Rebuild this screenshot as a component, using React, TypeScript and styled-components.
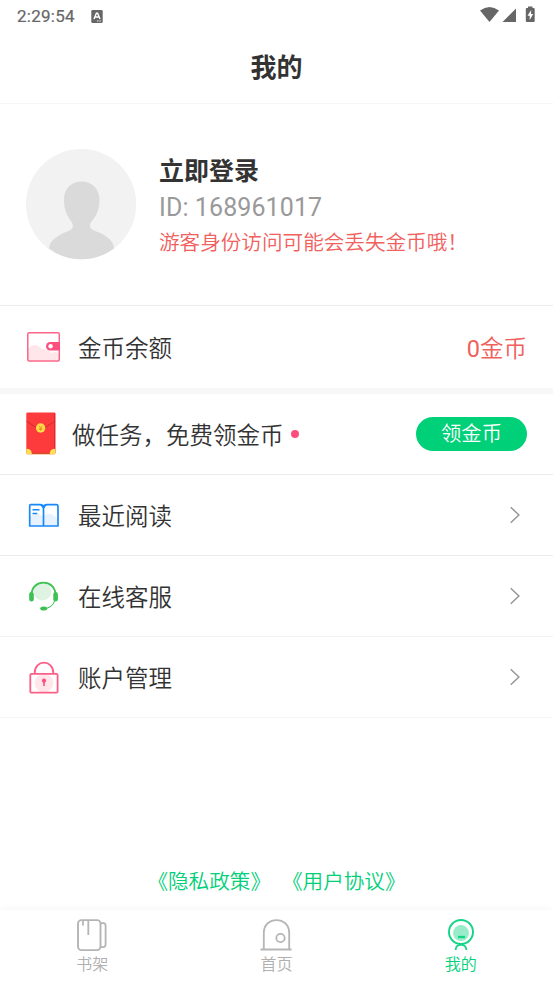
import React from "react";
import styled, { createGlobalStyle } from "styled-components";

const GlobalStyle = createGlobalStyle`
  * { box-sizing: border-box; }
  body {
    margin: 0;
    background: #fff;
    color: #333;
    font-family: Roboto, "Noto Sans CJK SC", sans-serif;
    font-weight: 350;
  }
  svg { display: block; flex: none; }
`;

const Page = styled.div`
  height: 984px;
  display: flex;
  flex-direction: column;
  overflow: hidden;
`;

const StatusBar = styled.div`
  height: 32px;
  flex: none;
  padding: 0 17px;
  display: flex;
  align-items: center;
  color: #666;
`;

const Clock = styled.span`
  width: 74px;
  font-size: 17px;
  font-weight: 400;
  line-height: 30px;
  letter-spacing: 0.25px;
  -webkit-text-stroke: 0.2px #666;
`;

const StatusIcons = styled.div`
  margin-left: auto;
  padding-bottom: 2px;
  display: flex;
`;

const Header = styled.header`
  height: 72px;
  flex: none;
  display: flex;
  justify-content: center;
  border-bottom: 1px solid #f5f5f5;
  font-size: 26px;
  font-weight: 700;
  line-height: 72px;
`;

const Profile = styled.section`
  height: 202px;
  flex: none;
  padding: 45px 26px 0;
  display: flex;
  gap: 22px;
  border-bottom: 1px solid #ebebeb;
`;

const ProfileText = styled.div`
  display: flex;
  flex-direction: column;
  padding-top: 4px;
  white-space: nowrap;
`;

const LoginTitle = styled.div`
  font-size: 25px;
  font-weight: 700;
  line-height: 37px;
`;

const UserId = styled.div`
  color: #999;
  font-size: 25px;
  font-weight: 400;
  line-height: 36px;
  letter-spacing: 0.1px;
`;

const Warning = styled.div`
  color: #f0605d;
  font-size: 20.6px;
  line-height: 34px;
`;

const Row = styled.div<{ $height?: number; $line?: string }>`
  height: ${(p) => p.$height ?? 81}px;
  flex: none;
  padding: 0 26px;
  display: flex;
  align-items: center;
  border-bottom: ${(p) => `1px solid ${p.$line ?? "#ebebeb"}`};
`;

const BalanceRow = styled(Row)`
  border-bottom: 6px solid #f7f7f7;
`;

const IconSlot = styled.div<{ $width?: number; $lift?: number; $drop?: number }>`
  width: ${(p) => p.$width ?? 52}px;
  flex: none;
  padding-bottom: ${(p) => p.$lift ?? 0}px;
  padding-top: ${(p) => p.$drop ?? 0}px;
`;

const RowLabel = styled.span<{ $drop?: number }>`
  padding-top: ${(p) => p.$drop ?? 4}px;
  font-size: 23.5px;
  line-height: 36px;
  white-space: nowrap;
`;

const Dot = styled.i`
  width: 8px;
  height: 8px;
  margin: 0 0 0 7px;
  border-radius: 50%;
  background: #fc4f7e;
`;

const Balance = styled.span`
  margin-left: auto;
  padding-top: 3px;
  color: #f0605d;
  font-size: 23.5px;
  line-height: 36px;
`;

const Amount = styled.span`
  font-weight: 400;
`;

const ClaimButton = styled.button`
  width: 111px;
  height: 34px;
  margin-left: auto;
  padding: 0;
  border: 0;
  border-radius: 17px;
  background: #00d078;
  color: #fff;
  font: 350 20.3px/34px Roboto, "Noto Sans CJK SC", sans-serif;
`;

const Chevron = styled.svg`
  margin: 0 7px 1px auto;
`;

const Agreements = styled.div`
  margin-top: auto;
  height: 56px;
  flex: none;
  display: flex;
  justify-content: center;
  gap: 11px;
  color: #00d078;
  font-size: 20.6px;
  line-height: 56px;
`;

const TabBar = styled.nav`
  height: 74px;
  flex: none;
  display: grid;
  grid-template-columns: repeat(3, 1fr);
  background: #fff;
  box-shadow: 0 -1px 8px rgba(0, 0, 0, 0.045);
`;

const Tab = styled.div<{ $active?: boolean }>`
  padding-top: 9px;
  display: flex;
  flex-direction: column;
  align-items: center;
  color: ${(p) => (p.$active ? "#00d078" : "#b0b0b0")};
  font-size: 16px;
  line-height: 24px;
`;

const TabIcon = styled.svg`
  margin-bottom: 1px;
`;

const InputBadge = () => (
  <svg width="12" height="13" viewBox="0 0 12 13">
    <rect x="0.3" y="0" width="11.4" height="13" rx="1.3" fill="#666" />
    <path d="M3 9 5.4 3.3h1.2L9 9M4.1 7h3.8" fill="none" stroke="#fff" strokeWidth="1.4" />
    <path d="M6 11h4" stroke="#fff" strokeWidth="1" strokeDasharray="1 .6" />
  </svg>
);

const SignalIcons = () => (
  <svg width="56" height="18" viewBox="480 6 56 18">
    <path d="M480 10.5Q489.5 3.5 499 10.5L489.5 22Z" fill="#666" />
    <path d="M502.5 22 516 8.5V22Z" fill="#666" />
    <path d="M528 8V6.5h4.5V8h1.2q1 0 1 1v12q0 1-1 1h-6.9q-1 0-1-1V9q0-1 1-1Z" fill="#666" />
    <path d="m531.2 10-3.7 5.7h2.2v4.2l3.5-5.8H531Z" fill="#fff" />
  </svg>
);

const Avatar = () => (
  <svg width="111" height="111" viewBox="0 0 111 111">
    <circle cx="55.1" cy="55.2" r="55.1" fill="#f2f2f2" />
    <path
      d="M55.5 32.5C45 32.5 38 40 38 50.5C38 62 42 68 46 73.5Q48.5 79 43.5 81.5C34 85 23 91 23 99.5Q37 110.3 55.3 110.3T88 99.5C88 91 78 85 68 81.5Q62 79 64.8 73.5C70 67 73.5 62 73.5 50.5C73.5 40 66 32.5 55.5 32.5Z"
      fill="#dadada"
    />
  </svg>
);

const WalletIcon = () => (
  <svg width="35" height="32" viewBox="0 0 35 32">
    <path d="M2 18Q9 10 16 18 22 18 26 22 32 19 33 24V29H2Z" fill="#ffe6eb" />
    <rect x="1.8" y="1.8" width="31.5" height="28.3" rx="1.5" fill="none" stroke="#fc6488" strokeWidth="1.5" />
    <path d="M34 11H24.3a4.3 4.3 0 0 0 0 8.6H34Z" fill="#fc4f7e" />
    <circle cx="24.6" cy="15.2" r="2.2" fill="#fff" />
  </svg>
);

const EnvelopeIcon = () => (
  <svg width="30" height="43" viewBox="0 0 30 43">
    <rect x=".3" y=".5" width="29" height="41.8" rx="1.2" fill="#fd3b3d" />
    <path d="M28 1h1.3v40H28Z" fill="#dd292e" />
    <path d="m.5 9 11 7.5q3 2 6.5 0L29 9" fill="none" stroke="#bd2931" strokeWidth=".8" />
    <path d="M.3 36.8q5 0 5.5 4h18q.5-4 5.5-4v5.5H.3Z" fill="#ffe052" />
    <path d="M5.8 38.5h18v2.3h-18Z" fill="#fd3b3d" />
    <path d="M5.8 41.3h18" stroke="#c82a28" />
    <circle cx="14.6" cy="16" r="4.7" fill="#ffdc45" />
    <path d="m12.8 13.7 1.8 2 1.8-2m-1.8 2v3m-1.7-2.5h3.4m-3.4 1.3h3.4" fill="none" stroke="#e88924" strokeWidth=".8" />
  </svg>
);

const BookIcon = () => (
  <svg width="35" height="27" viewBox="0 0 35 27">
    <path d="M3 16Q10 8 16 14 26 9 31 17V24H3Z" fill="#e8f2ff" />
    <path d="M4.7 2.7H14q3.5 0 3.5 3 0-3 3.5-3h9.3q1.7 0 1.7 1.5V24H3.7V4.2q0-1.5 1-1.5ZM17.5 5.5V24" fill="none" stroke="#1989fa" strokeWidth="1.7" strokeLinejoin="round" />
    <path d="m15 3 2.5 3L20 3" fill="none" stroke="#1989fa" strokeWidth="1.2" />
    <path d="M6.5 7.8h7M6.5 11.5h4.8" stroke="#1989fa" strokeWidth="1.4" />
  </svg>
);

const HeadsetIcon = () => (
  <svg width="35" height="34" viewBox="0 0 35 34">
    <circle cx="16.5" cy="11.5" r="9" fill="#dff3e3" />
    <path d="M5.5 15C5.5-1.5 29.5-1.5 29.5 15" fill="none" stroke="#3dc153" strokeWidth="1.8" />
    <rect x="3.2" y="12" width="4.6" height="9.5" rx="2.2" fill="#3dc153" />
    <rect x="27.3" y="12" width="4.6" height="9.5" rx="2.2" fill="#3dc153" />
    <path d="M28.5 20.5Q27.8 26 20.5 28.4" fill="none" stroke="#3dc153" strokeWidth="1" />
    <ellipse cx="17.7" cy="28.4" rx="3.5" ry="2" fill="#3dc153" />
  </svg>
);

const LockIcon = () => (
  <svg width="35" height="34" viewBox="0 0 35 34">
    <circle cx="18" cy="22" r="9.3" fill="#ffe6eb" />
    <rect x="4.3" y="12.9" width="27.3" height="18.8" rx="1.2" fill="none" stroke="#fc5f86" strokeWidth="1.8" />
    <path d="M8.6 12.7C8.6-2 27.4-2 27.4 12.7" fill="none" stroke="#fc5f86" strokeWidth="1.8" />
    <circle cx="18" cy="19.7" r="2.1" fill="#fc4f7e" />
    <path d="M18 20v5" stroke="#fc4f7e" strokeWidth="1.6" />
  </svg>
);

const Arrow = () => (
  <Chevron width="11" height="18" viewBox="0 0 11 18">
    <path d="m1.7 1.2 8.2 7.8-8.2 7.8" fill="none" stroke="#969799" strokeWidth="1.5" />
  </Chevron>
);

const ShelfIcon = () => (
  <TabIcon width="32" height="33" viewBox="0 0 32 33">
    <rect x="2" y="1.1" width="22.5" height="30" rx="3.5" fill="none" stroke="#b5b5b5" strokeWidth="1.9" />
    <path d="M24.5 4.1h2.7q2.4 0 2.4 2.5v19q0 2.5-2.4 2.5h-2.7M12.3 1.6v14.5M7 1.6v5" fill="none" stroke="#b5b5b5" strokeWidth="1.8" />
  </TabIcon>
);

const HomeIcon = () => (
  <TabIcon width="32" height="33" viewBox="0 0 32 33">
    <path d="M3.8 30V14C3.8-3.3 29.2-3.3 29.2 14V30M.5 30.5h31" fill="none" stroke="#b5b5b5" strokeWidth="1.8" />
    <circle cx="20.5" cy="19" r="4.2" fill="none" stroke="#b5b5b5" strokeWidth="1.8" />
  </TabIcon>
);

const MeIcon = () => (
  <TabIcon width="32" height="33" viewBox="0 0 32 33">
    <circle cx="16" cy="13" r="12" fill="none" stroke="#14d487" strokeWidth="1.9" />
    <circle cx="16" cy="14.1" r="8" fill="#99ecc9" />
    <path d="M13 18h7" stroke="#14d487" strokeWidth="2.3" />
    <path d="M10.6 31C10.6 24 21.4 24 21.4 31" fill="none" stroke="#14d487" strokeWidth="1.9" />
  </TabIcon>
);

const menu = [
  { label: "最近阅读", Icon: BookIcon, line: "#ebebeb", drop: 1 },
  { label: "在线客服", Icon: HeadsetIcon, line: "#f2f2f2", drop: 2 },
  { label: "账户管理", Icon: LockIcon, line: "#f5f5f5", drop: 2 },
];

export default function App() {
  return (
    <>
      <GlobalStyle />
      <Page>
        <StatusBar>
          <Clock>2:29:54</Clock>
          <InputBadge />
          <StatusIcons><SignalIcons /></StatusIcons>
        </StatusBar>
        <Header>我的</Header>
        <Profile>
          <Avatar />
          <ProfileText>
            <LoginTitle>立即登录</LoginTitle>
            <UserId>ID: 168961017</UserId>
            <Warning>游客身份访问可能会丢失金币哦！</Warning>
          </ProfileText>
        </Profile>
        <BalanceRow $height={88}>
          <IconSlot><WalletIcon /></IconSlot>
          <RowLabel $drop={3}>金币余额</RowLabel>
          <Balance><Amount>0</Amount>金币</Balance>
        </BalanceRow>
        <Row>
          <IconSlot $width={46} $lift={2}><EnvelopeIcon /></IconSlot>
          <RowLabel>做任务，免费领金币</RowLabel>
          <Dot />
          <ClaimButton>领金币</ClaimButton>
        </Row>
        {menu.map(({ label, Icon, line, drop }) => (
          <Row key={label} $line={line}>
            <IconSlot $drop={drop}><Icon /></IconSlot>
            <RowLabel>{label}</RowLabel>
            <Arrow />
          </Row>
        ))}
        <Agreements>
          <span>《隐私政策》</span>
          <span>《用户协议》</span>
        </Agreements>
        <TabBar>
          <Tab><ShelfIcon />书架</Tab>
          <Tab><HomeIcon />首页</Tab>
          <Tab $active><MeIcon />我的</Tab>
        </TabBar>
      </Page>
    </>
  );
}
